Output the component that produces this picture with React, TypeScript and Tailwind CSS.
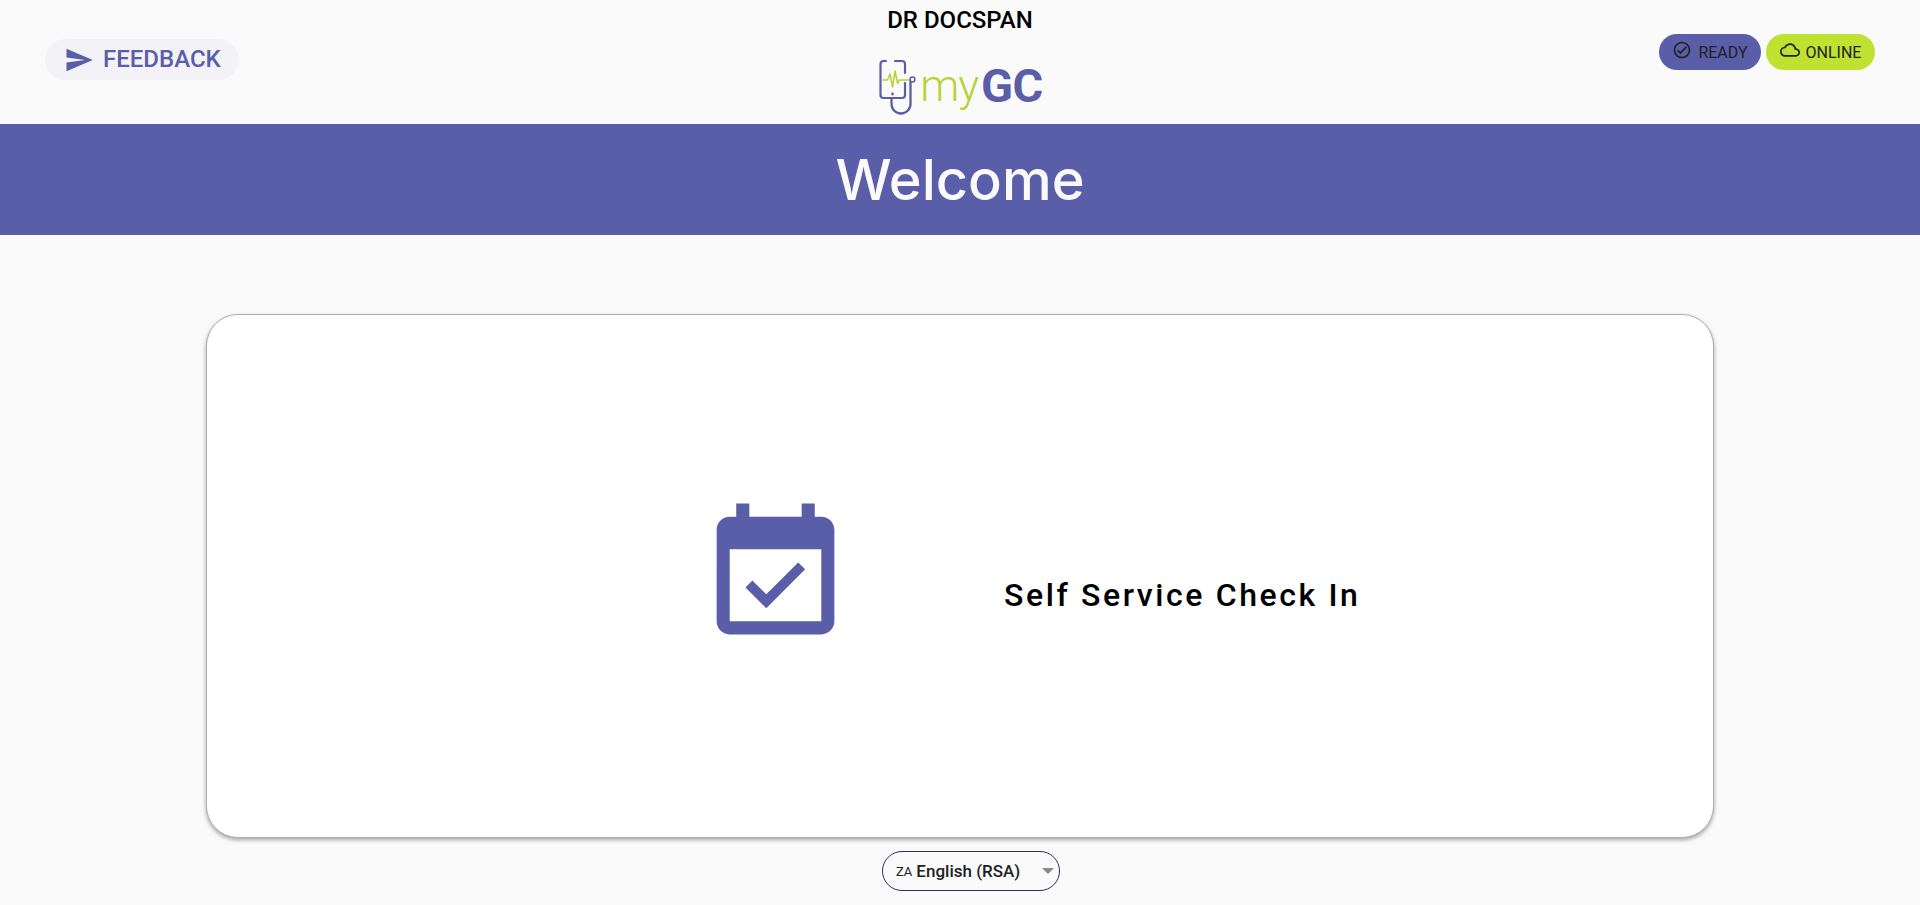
function Logo() {
  return (
    <div className="flex items-end h-[60px] font-['Roboto',sans-serif]">
      <svg width="44" height="60" viewBox="0 0 44 60" fill="none" className="shrink-0">
        <path d="M9 3H6.500a3 3 0 0 0-3 3v31a3 3 0 0 0 3 3H25a3 3 0 0 0 3-3V25M28 15V6a3 3 0 0 0-3-3h-7" stroke="#5a5da8" strokeWidth="2.200" strokeLinecap="round" />
        <circle cx="15.500" cy="36" r="1.400" fill="#5a5da8" />
        <path d="M14.500 41v5a9.500 9.500 0 0 0 19 0V24" stroke="#5a5da8" strokeWidth="2.300" strokeLinecap="round" />
        <path d="M5.500 22h5l2.500-6 2.700 13 2.300-16 2.700 12.500 1.600-3.500h12" stroke="#b5d334" strokeWidth="1.500" strokeLinejoin="round" />
        <circle cx="35.500" cy="21.500" r="2.400" fill="#fafafa" stroke="#5a5da8" strokeWidth="1.500" />
      </svg>
      <span className="text-[44px] leading-[50px] font-light tracking-[-1px] text-[#b5d334] mb-[7px] ml-[-1px]">my</span>
      <span className="text-[47px] leading-[50px] font-bold tracking-[-0.500px] text-[#5a5da8] mb-[7px] ml-[3px]">GC</span>
    </div>
  );
}

export default function App() {
  return (
    <div className="min-h-[905px] bg-[#fafafa] font-['Roboto',sans-serif] flex flex-col">
      <header className="h-[124px] grid grid-cols-[1fr_auto_1fr]">
        <div className="pl-[45px] pt-[39px]">
          <button className="h-[41px] w-[194px] rounded-full bg-[#f3f3f7] flex items-center pl-[19px] gap-[9px] text-[#5a5da8] text-[24px] font-medium">
            <svg width="30" height="30" viewBox="0 0 24 24" fill="currentColor" className="shrink-0">
              <path d="M2.010 21L23 12 2.010 3 2 10l15 2-15 2z" />
            </svg>
            <span className="mb-[2px]">FEEDBACK</span>
          </button>
        </div>
        <div className="flex flex-col items-center">
          <div className="text-[24px] leading-[28px] font-medium text-black mt-[6px] mb-[24px]">DR DOCSPAN</div>
          <Logo />
        </div>
        <div className="flex justify-end gap-[5px] pr-[45px] pt-[34px]">
          <div className="h-[36px] w-[102px] rounded-full bg-[#5a5da8] flex items-center justify-center gap-[6px] text-[16px] text-[#212121]">
            <svg width="20" height="20" viewBox="0 0 24 24" fill="currentColor" className="mt-[-4px]">
              <path d="M12 2C6.480 2 2 6.480 2 12s4.480 10 10 10 10-4.480 10-10S17.520 2 12 2zm0 18c-4.410 0-8-3.590-8-8s3.590-8 8-8 8 3.590 8 8-3.590 8-8 8zm4.590-12.420L10 14.170l-2.590-2.580L6 13l4 4 8-8z" />
            </svg>
            <span className="mt-[1px]">READY</span>
          </div>
          <div className="h-[36px] w-[109px] rounded-full bg-[#bee22f] flex items-center justify-center gap-[6px] text-[16px] text-[#212121]">
            <svg width="20" height="20" viewBox="0 0 24 24" fill="currentColor" className="mt-[-4px]">
              <path d="M12 6c2.620 0 4.880 1.860 5.390 4.430l.3 1.500 1.530.11c1.560.1 2.780 1.410 2.780 2.960 0 1.650-1.350 3-3 3H6c-2.210 0-4-1.790-4-4 0-2.050 1.530-3.760 3.560-3.970l1.070-.11.5-.95C8.080 7.140 9.940 6 12 6m0-2C9.110 4 6.600 5.640 5.350 8.040 2.340 8.360 0 10.910 0 14c0 3.310 2.690 6 6 6h13c2.760 0 5-2.240 5-5 0-2.640-2.050-4.780-4.650-4.960C18.670 6.590 15.640 4 12 4z" />
            </svg>
            <span className="mt-[1px]">ONLINE</span>
          </div>
        </div>
      </header>

      <div className="h-[111px] bg-[#5a5da8] flex items-center justify-center">
        <h1 className="text-[56px] font-medium text-[#fafafa] font-['Inter',sans-serif]">Welcome</h1>
      </div>

      <main className="flex flex-col items-center pt-[79px]">
        <div className="w-[1508px] h-[524px] bg-white rounded-[32px] border border-[#b0b0b0] shadow-[0_2px_4px_rgba(0,0,0,0.35)] flex items-center pl-[490px]">
          <svg width="157" height="157" viewBox="0 0 24 24" fill="#5a5da8" className="shrink-0 mb-[2px]">
            <path d="M16.530 11.060L15.470 10l-4.880 4.880-2.120-2.120-1.060 1.060L10.590 17l5.940-5.940zM19 3h-1V1h-2v2H8V1H6v2H5c-1.110 0-1.990.9-1.990 2L3 19c0 1.100.89 2 2 2h14c1.100 0 2-.9 2-2V5c0-1.100-.9-2-2-2zm0 16H5V8h14v11z" />
          </svg>
          <span className="ml-[150px] mt-[37px] text-[32px] font-medium tracking-[2.600px] text-black">Self Service Check In</span>
        </div>
        <div className="mt-[13px] ml-[22px] w-[178px] h-[40px] rounded-full border border-[#2f2a6b] flex items-center pl-[13px] pr-[5px] text-[17px] font-medium text-[#212121]">
          <span className="text-[13px] font-normal mr-[4px] mt-[1px]">ZA</span>
          <span className="mt-[1px]">English (RSA)</span>
          <span className="ml-auto w-0 h-0 border-x-[6px] border-x-transparent border-t-[6px] border-t-[#8a8a8a]" />
        </div>
      </main>
    </div>
  );
}
